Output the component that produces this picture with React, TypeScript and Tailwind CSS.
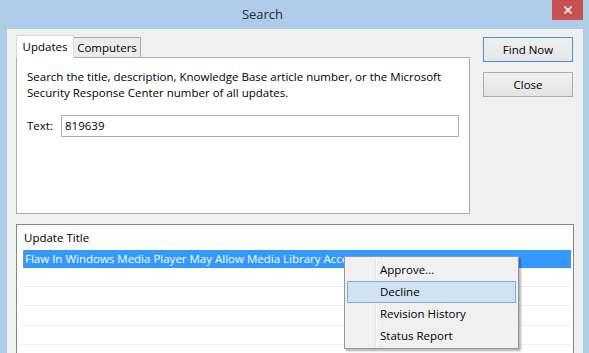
import { X } from 'lucide-react'

const font = { fontFamily: '"Open Sans", "Noto Sans", sans-serif' }

function PushButton({ label, isDefault }: { label: string; isDefault?: boolean }) {
  return (
    <button
      className={`h-[25px] w-[90px] border text-[11.5px] text-black bg-gradient-to-b from-[#f0f0f0] to-[#e5e5e5] ${
        isDefault ? 'border-[#3399ff]' : 'border-[#acacac]'
      }`}
    >
      {label}
    </button>
  )
}

const menuItems = ['Approve...', 'Decline', 'Revision History', 'Status Report']

export default function App() {
  return (
    <div
      className="relative flex h-[353px] w-[589px] flex-col overflow-hidden bg-[#aecbe8] text-[11.5px] text-black"
      style={font}
    >
      {/* Title bar */}
      <div className="relative flex h-[29px] shrink-0 items-center justify-center pr-[64px]">
        <span className="text-[13px] text-[#2b2b2b]">Search</span>
        <div className="absolute right-[6px] top-0 flex h-[20px] w-[31px] items-center justify-center bg-[#c75050]">
          <X className="h-[12px] w-[12px] text-white" strokeWidth={3.5} />
        </div>
      </div>

      {/* Client area */}
      <div className="ml-[7px] mr-[6px] flex flex-1 flex-col bg-[#f0f0f0] pl-[9px] pr-[9px]">
        <div className="flex gap-[13px]">
          {/* Tabs */}
          <div className="flex w-[454px] flex-col pt-[6px]">
            <div className="relative z-10 flex items-end">
              <div className="-mb-px flex h-[23px] w-[58px] items-center justify-center border border-b-0 border-[#d9d9d9] bg-white">
                Updates
              </div>
              <div className="flex h-[20px] w-[67px] items-center justify-center border border-b-0 border-l-0 border-[#acacac] bg-[#ececec]">
                Computers
              </div>
            </div>
            <div className="h-[157px] border border-[#adadad] bg-white px-[10px] pt-[11px]">
              <p className="leading-[16px]">
                Search the title, description, Knowledge Base article number, or the Microsoft
                Security Response Center number of all updates.
              </p>
              <div className="mt-[14px] flex items-center">
                <span className="w-[34px]">Text:</span>
                <div className="flex h-[22px] w-[398px] items-center border border-[#abadb3] bg-white px-[3px]">
                  819639
                </div>
              </div>
            </div>
          </div>

          {/* Buttons */}
          <div className="flex flex-col gap-[10px] pt-[8px]">
            <PushButton label="Find Now" isDefault />
            <PushButton label="Close" />
          </div>
        </div>

        {/* Result list */}
        <div className="mt-[10px] flex-1 border-l border-t border-r border-[#828790] bg-white">
          <div className="flex h-[25px] items-center bg-[#fcfcfc] pl-[7px]">Update Title</div>
          <div className="px-[1px]">
            <div className="ml-[5px] mr-[1px] flex h-[18px] items-center border-l border-dotted border-l-[#e08a2a] bg-[#3399ff] pl-[1px] text-white whitespace-nowrap overflow-hidden">
              Flaw In Windows Media Player May Allow Media Library Access
            </div>
            <div className="h-[19px] border-b border-[#f0f0f0]" />
            <div className="h-[19px] border-b border-[#f0f0f0]" />
            <div className="h-[20px] border-b border-[#f0f0f0]" />
            <div className="h-[19px] border-b border-[#f0f0f0]" />
          </div>
        </div>
      </div>

      {/* Context menu */}
      <div className="absolute left-[344px] top-[256px] h-[93px] w-[175px] border border-[#979797] bg-[#f0f0f0] px-[2px] py-[2px] shadow-[2px_2px_2px_rgba(0,0,0,0.3)]">
        <div className="absolute bottom-[2px] left-[30px] top-[2px] w-px bg-[#e2e3e3]" />
        <div className="absolute bottom-[2px] left-[31px] top-[2px] w-px bg-white" />
        {menuItems.map((item) => (
          <div
            key={item}
            className={`relative flex h-[22px] items-center pl-[32px] ${
              item === 'Decline' ? 'border border-[#78aee5] bg-[#d1e2f2]' : 'border border-transparent'
            }`}
          >
            {item}
          </div>
        ))}
      </div>
    </div>
  )
}
